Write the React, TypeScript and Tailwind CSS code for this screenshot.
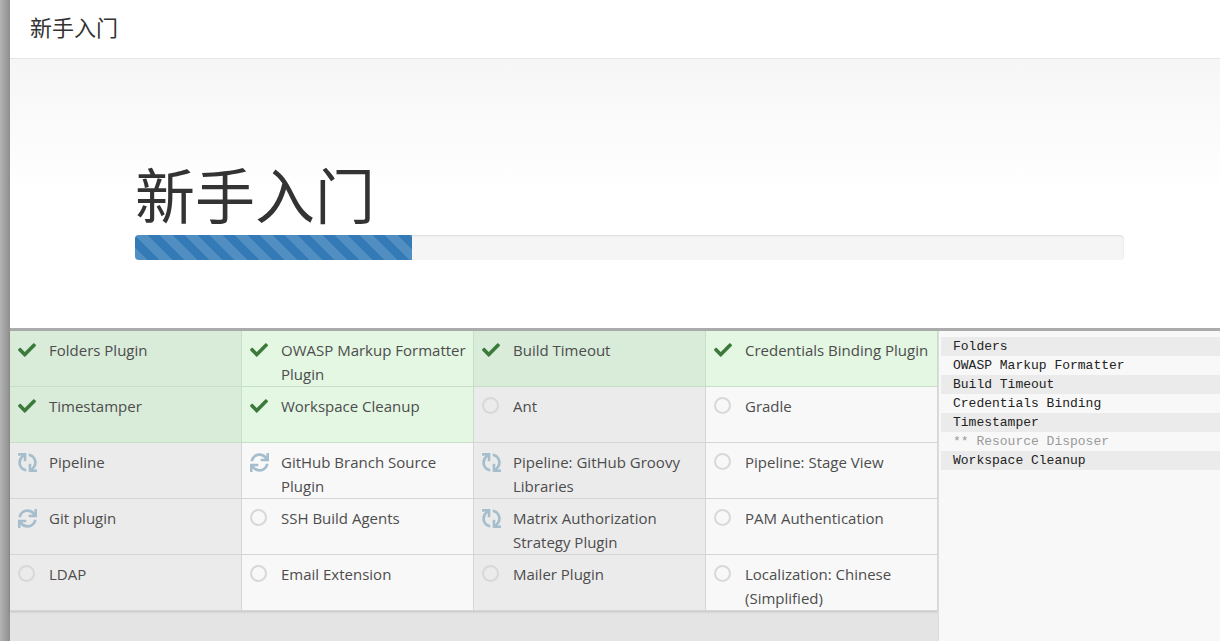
import React from 'react';
import { FaCheck, FaSync } from 'react-icons/fa';

type Status = 'done' | 'spin' | 'spinAlt' | 'wait';

const plugins: { name: string; status: Status }[] = [
  { name: 'Folders Plugin', status: 'done' },
  { name: 'OWASP Markup Formatter Plugin', status: 'done' },
  { name: 'Build Timeout', status: 'done' },
  { name: 'Credentials Binding Plugin', status: 'done' },
  { name: 'Timestamper', status: 'done' },
  { name: 'Workspace Cleanup', status: 'done' },
  { name: 'Ant', status: 'wait' },
  { name: 'Gradle', status: 'wait' },
  { name: 'Pipeline', status: 'spinAlt' },
  { name: 'GitHub Branch Source Plugin', status: 'spin' },
  { name: 'Pipeline: GitHub Groovy Libraries', status: 'spinAlt' },
  { name: 'Pipeline: Stage View', status: 'wait' },
  { name: 'Git plugin', status: 'spin' },
  { name: 'SSH Build Agents', status: 'wait' },
  { name: 'Matrix Authorization Strategy Plugin', status: 'spinAlt' },
  { name: 'PAM Authentication', status: 'wait' },
  { name: 'LDAP', status: 'wait' },
  { name: 'Email Extension', status: 'wait' },
  { name: 'Mailer Plugin', status: 'wait' },
  { name: 'Localization: Chinese (Simplified)', status: 'wait' },
];

const logLines = [
  { text: 'Folders' },
  { text: 'OWASP Markup Formatter' },
  { text: 'Build Timeout' },
  { text: 'Credentials Binding' },
  { text: 'Timestamper' },
  { text: '** Resource Disposer', dim: true },
  { text: 'Workspace Cleanup' },
];

const StatusIcon: React.FC<{ status: Status }> = ({ status }) => {
  if (status === 'done') return <FaCheck className="text-[#3b7a3b] w-[18px] h-[18px]" />;
  if (status === 'spin') return <FaSync className="text-[#a5bdcd] w-[19px] h-[19px]" />;
  if (status === 'spinAlt') return <FaSync className="text-[#a5bdcd] w-[19px] h-[19px] rotate-90" />;
  return <div className="w-[17px] h-[17px] rounded-full border-2 border-[#d8d8d8]" />;
};

const cellBg = (status: Status, col: number) => {
  if (status === 'done') return col % 2 === 0 ? 'bg-[#d9ebd9] border-[#c7dec7]' : 'bg-[#e3f7e3] border-[#c7dec7]';
  return col % 2 === 0 ? 'bg-[#ebebeb] border-[#d6d6d6]' : 'bg-[#f8f8f8] border-[#d6d6d6]';
};

export default function App() {
  return (
    <div className="flex h-[641px] w-[1220px] overflow-hidden bg-white" style={{ fontFamily: '"Open Sans", "Noto Sans CJK SC", sans-serif' }}>
      <div className="w-[10px] shrink-0 bg-linear-to-r from-[#b4b4b4] to-[#8e8e8e]" />
      <div className="flex flex-col flex-1 min-w-0">
        <div className="h-[59px] shrink-0 border-b border-[#e5e5e5] flex items-center pl-5 pb-[6px] text-[22px] text-[#333]" style={{ fontFamily: '"Noto Sans CJK SC", sans-serif' }}>
          新手入门
        </div>
        <div className="h-[269px] shrink-0 bg-linear-to-b from-[#f6f6f6] to-white to-50% pl-[125px] pr-[96px] pt-[98px]">
          <h1 className="text-[60px] leading-[72px] text-[#333]" style={{ fontFamily: '"Noto Sans CJK SC", sans-serif' }}>新手入门</h1>
          <div className="mt-[6px] h-[25px] rounded bg-[#f5f5f5] shadow-[inset_0_1px_2px_rgba(0,0,0,0.1)] overflow-hidden">
            <div className="h-full w-[28%] bg-[#337ab7] bg-[linear-gradient(45deg,rgba(255,255,255,.15)_25%,transparent_25%,transparent_50%,rgba(255,255,255,.15)_50%,rgba(255,255,255,.15)_75%,transparent_75%,transparent)] bg-size-[25px_25px]" />
          </div>
        </div>
        <div className="flex flex-1 min-h-0 border-t-[3px] border-[#ababab]">
          <div className="w-[928px] shrink-0 bg-[#e4e4e4]">
            <div className="grid grid-cols-4 shadow-[0_1px_2px_rgba(0,0,0,0.15)]">
              {plugins.map((p, i) => (
                <div key={p.name} className={`flex h-[56px] pt-[7px] pl-2 pr-1 border-r border-b text-[15px] text-[#4d4d4d] ${cellBg(p.status, i % 4)}`}>
                  <div className="w-[31px] shrink-0 pt-[3px]">
                    <StatusIcon status={p.status} />
                  </div>
                  <div className="leading-[24px]">{p.name}</div>
                </div>
              ))}
            </div>
          </div>
          <div className="flex-1 bg-[#f8f8f8] border-l border-[#dcdcdc] pt-[6px] pl-[2px]" style={{ fontFamily: '"Liberation Mono", monospace' }}>
            {logLines.map((l, i) => (
              <div key={l.text} className={`h-[19px] leading-[19px] pl-3 text-[13px] whitespace-pre ${i % 2 === 0 ? 'bg-[#ebebeb]' : ''} ${l.dim ? 'text-[#9a9a9a]' : 'text-[#222]'}`}>
                {l.text}
              </div>
            ))}
          </div>
        </div>
      </div>
    </div>
  );
}
